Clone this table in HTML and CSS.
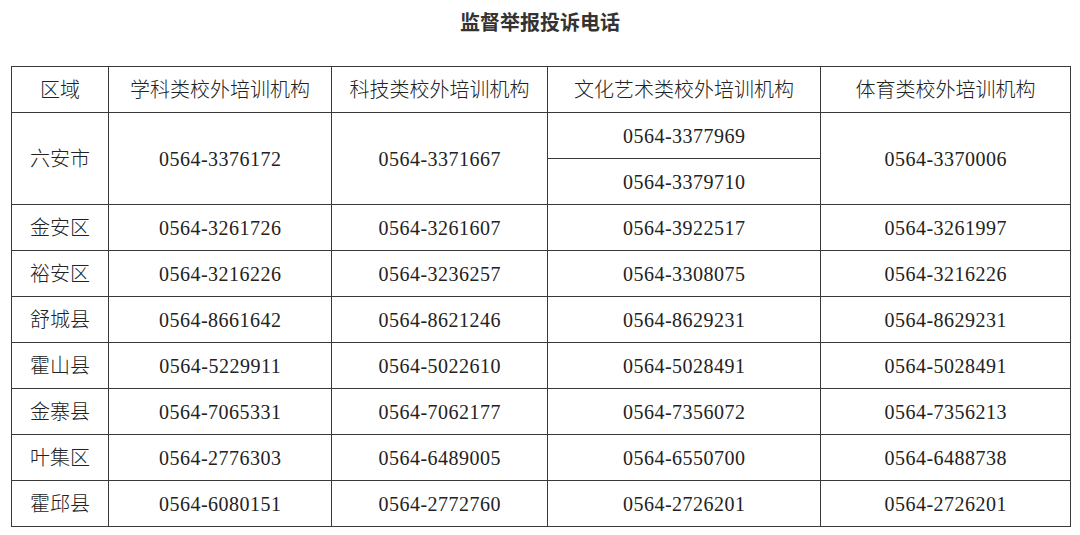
FILE: index.html
```html
<!DOCTYPE html>
<html lang="zh-CN">
<head>
<meta charset="utf-8">
<title>监督举报投诉电话</title>
<link rel="stylesheet" href="styles.css">
</head>
<body>
<div class="page">
  <h1 class="title">监督举报投诉电话</h1>
  <table class="grid">
    <colgroup>
      <col class="c1"><col class="c2"><col class="c3"><col class="c4"><col class="c5">
    </colgroup>
    <thead>
      <tr>
        <th>区域</th>
        <th>学科类校外培训机构</th>
        <th>科技类校外培训机构</th>
        <th>文化艺术类校外培训机构</th>
        <th>体育类校外培训机构</th>
      </tr>
    </thead>
    <tbody>
      <tr>
        <td rowspan="2">六安市</td>
        <td rowspan="2" class="num">0564-3376172</td>
        <td rowspan="2" class="num">0564-3371667</td>
        <td class="num">0564-3377969</td>
        <td rowspan="2" class="num">0564-3370006</td>
      </tr>
      <tr><td class="num">0564-3379710</td></tr>
      <tr><td>金安区</td><td class="num">0564-3261726</td><td class="num">0564-3261607</td><td class="num">0564-3922517</td><td class="num">0564-3261997</td></tr>
      <tr><td>裕安区</td><td class="num">0564-3216226</td><td class="num">0564-3236257</td><td class="num">0564-3308075</td><td class="num">0564-3216226</td></tr>
      <tr><td>舒城县</td><td class="num">0564-8661642</td><td class="num">0564-8621246</td><td class="num">0564-8629231</td><td class="num">0564-8629231</td></tr>
      <tr><td>霍山县</td><td class="num">0564-5229911</td><td class="num">0564-5022610</td><td class="num">0564-5028491</td><td class="num">0564-5028491</td></tr>
      <tr><td>金寨县</td><td class="num">0564-7065331</td><td class="num">0564-7062177</td><td class="num">0564-7356072</td><td class="num">0564-7356213</td></tr>
      <tr><td>叶集区</td><td class="num">0564-2776303</td><td class="num">0564-6489005</td><td class="num">0564-6550700</td><td class="num">0564-6488738</td></tr>
      <tr><td>霍邱县</td><td class="num">0564-6080151</td><td class="num">0564-2772760</td><td class="num">0564-2726201</td><td class="num">0564-2726201</td></tr>
    </tbody>
  </table>
</div>
</body>
</html>
```

FILE: styles.css
```css
html, body {
  margin: 0;
  padding: 0;
  background: #ffffff;
}
.page {
  width: 1080px;
  padding: 0 0 0 11px;
  box-sizing: border-box;
}
.title {
  margin: 0;
  height: 66px;
  padding-top: 8px;
  padding-right: 11px;
  box-sizing: border-box;
  text-align: center;
  font-family: "Noto Sans CJK SC", sans-serif;
  font-weight: 700;
  font-size: 20px;
  line-height: 28px;
  color: #333333;
}
.grid {
  border-collapse: collapse;
  table-layout: fixed;
  width: 1059px;
  font-family: "Liberation Serif", "Noto Sans CJK SC", serif;
  font-size: 20px;
  color: #222222;
}
.c1 { width: 97px; }
.c2 { width: 223px; }
.c3 { width: 216px; }
.c4 { width: 273px; }
.c5 { width: 250px; }
.grid th,
.grid td {
  border: 1px solid #3a3a3a;
  height: 45px;
  padding: 0;
  text-align: center;
  vertical-align: middle;
  font-weight: 300;
  line-height: 24px;
}
.grid .num {
  letter-spacing: 0.5px;
  text-indent: 0.5px;
}
```
